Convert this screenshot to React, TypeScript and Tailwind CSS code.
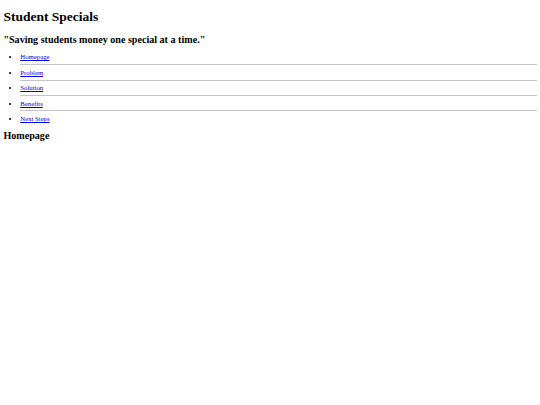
const navItems = ["Homepage", "Problem", "Solution", "Benefits", "Next Steps"];

export default function App() {
  return (
    <div className="min-h-[405px] bg-white px-[3.4px] py-[0.1px] font-['Liberation_Serif',serif] text-black leading-[normal]">
      <h1 className="my-[9px] text-[13.5px] font-bold">Student Specials</h1>
      <h2 className="my-[8.4px] text-[10.1px] font-bold">"Saving students money one special at a time."</h2>
      <ul className="my-[6.75px] list-disc pl-[16.9px] text-[6.75px]">
        {navItems.map((item, i) => (
          <li
            key={item}
            className={
              i < navItems.length - 1
                ? "mb-[3.7px] border-b border-[#c4c4c4] pb-[3.7px]"
                : ""
            }
          >
            <a href="#" className="text-[#0000ee] underline">
              {item}
            </a>
          </li>
        ))}
      </ul>
      <h2 className="my-[8.3px] text-[10.1px] font-bold">Homepage</h2>
    </div>
  );
}
